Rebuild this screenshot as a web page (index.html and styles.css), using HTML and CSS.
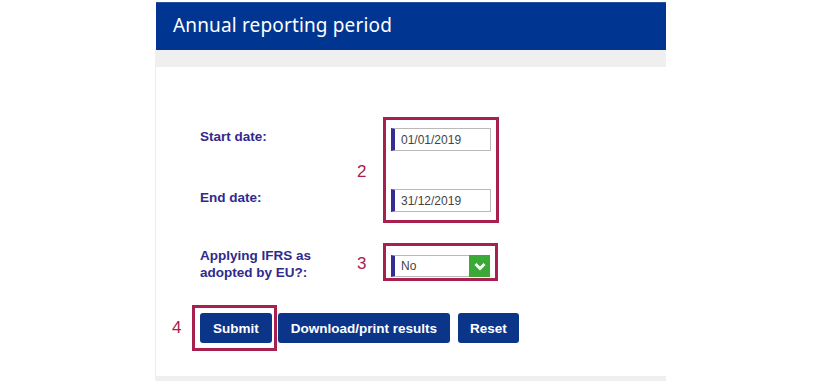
FILE: index.html
```html
<!DOCTYPE html>
<html lang="en">
<head>
    <meta charset="UTF-8">
    <meta name="viewport" content="width=device-width, initial-scale=1.0">
    <title>Annual reporting period</title>
    <link rel="stylesheet" href="styles.css">
</head>
<body>
    <div class="page">
        <div class="header">
            <h2>Annual reporting period</h2>
        </div>
        <div class="band"></div>
        <div class="panel">
            <!-- Dates -->
            <div class="group dates">
                <div class="labels">
                    <label>Start date:</label>
                    <label>End date:</label>
                </div>
                <div class="step">2</div>
                <div class="mark">
                    <input type="text" class="field" value="01/01/2019">
                    <input type="text" class="field" value="31/12/2019">
                </div>
            </div>
            <!-- IFRS -->
            <div class="group ifrs">
                <div class="labels">
                    <label class="twoLines">Applying IFRS as<br>adopted by EU?:</label>
                </div>
                <div class="step">3</div>
                <div class="mark">
                    <div class="select">
                        <span class="value">No</span>
                        <span class="arrow">
                            <svg width="12" height="9" viewBox="0 0 12 9"><path d="M1.5 2 L6 6.5 L10.5 2" fill="none" stroke="#fff" stroke-width="2.8"/></svg>
                        </span>
                    </div>
                </div>
            </div>
            <!-- Buttons -->
            <div class="actions">
                <div class="step">4</div>
                <div class="mark">
                    <button class="btn">Submit</button>
                </div>
                <button class="btn download">Download/print results</button>
                <button class="btn reset">Reset</button>
            </div>
        </div>
        <div class="band bottom"></div>
    </div>
</body>
</html>
```

FILE: styles.css
```css
*{
    box-sizing: border-box;
    margin: 0;
    padding: 0;
}

body {
    background-color: #fff;
    font-family: 'Liberation Sans', Arial, sans-serif;
}

.page {
    margin-left: 155px;
    width: 511px;
}

.header {
    margin: 2px 0 0 1px;
    height: 48px;
    background: #003591;
    border-top: 1px solid #2a52a0;
    display: flex;
    align-items: center;
    padding-left: 17px;
}

.header h2 {
    font-family: 'Noto Sans', sans-serif;
    font-weight: normal;
    font-size: 19px;
    letter-spacing: 0.15px;
    color: #fff;
    margin-top: -3px;
}

.band {
    height: 17px;
    background: #efefef;
}

.band.bottom {
    height: 6px;
}

.panel {
    border-left: 1px solid #ececec;
    padding: 50px 0 25px 44px;
}

.group {
    display: flex;
    align-items: center;
}

.group.ifrs {
    margin-top: 20px;
}

.labels {
    width: 157px;
    display: flex;
    flex-direction: column;
    gap: 38px;
    color: #2f2a8c;
    font-weight: bold;
    font-size: 13.5px;
}

.dates .labels {
    align-self: flex-start;
    padding-top: 8px;
}

.labels label {
    height: 23px;
    line-height: 23px;
}

.labels label.twoLines {
    height: auto;
    line-height: 17px;
    padding-top: 3px;
}

.step {
    width: 26px;
    color: #a8204e;
    font-size: 17px;
    padding-top: 4px;
}

.mark {
    border: 3px solid #a8204e;
}

.dates .mark {
    display: flex;
    flex-direction: column;
    gap: 38px;
    padding: 8px 5px;
}

.ifrs .mark {
    padding: 9px 5px 1px 5px;
}

.field {
    width: 100px;
    height: 23px;
    border: 1px solid #b9b9b9;
    border-left: 4px solid #372c94;
    padding-left: 6px;
    font-family: 'Liberation Sans', Arial, sans-serif;
    font-size: 12px;
    color: #444;
    outline: none;
}

.select {
    width: 99px;
    height: 22px;
    display: flex;
    border: 1px solid #b9b9b9;
    border-left: 4px solid #372c94;
    font-size: 12px;
    color: #444;
}

.select .value {
    flex: 1;
    padding-left: 6px;
    line-height: 20px;
}

.select .arrow {
    width: 21px;
    margin: -1px -1px -1px 0;
    background: #3aa936;
    display: flex;
    justify-content: center;
    align-items: center;
}

.actions {
    margin: 24px 0 0 -28px;
    display: flex;
    align-items: center;
}

.actions .step {
    width: 20px;
    padding-top: 0;
}

.actions .mark {
    padding: 5px 2px 5px 5px;
}

.btn {
    height: 30px;
    padding: 0 13px;
    background: #0b3589;
    color: #fff;
    border: none;
    border-radius: 3px;
    font-family: 'Liberation Sans', Arial, sans-serif;
    font-weight: bold;
    font-size: 13.5px;
    cursor: pointer;
}

.btn.download {
    margin-left: 1px;
}

.btn.reset {
    margin-left: 8px;
    padding: 0 12px;
}
```
